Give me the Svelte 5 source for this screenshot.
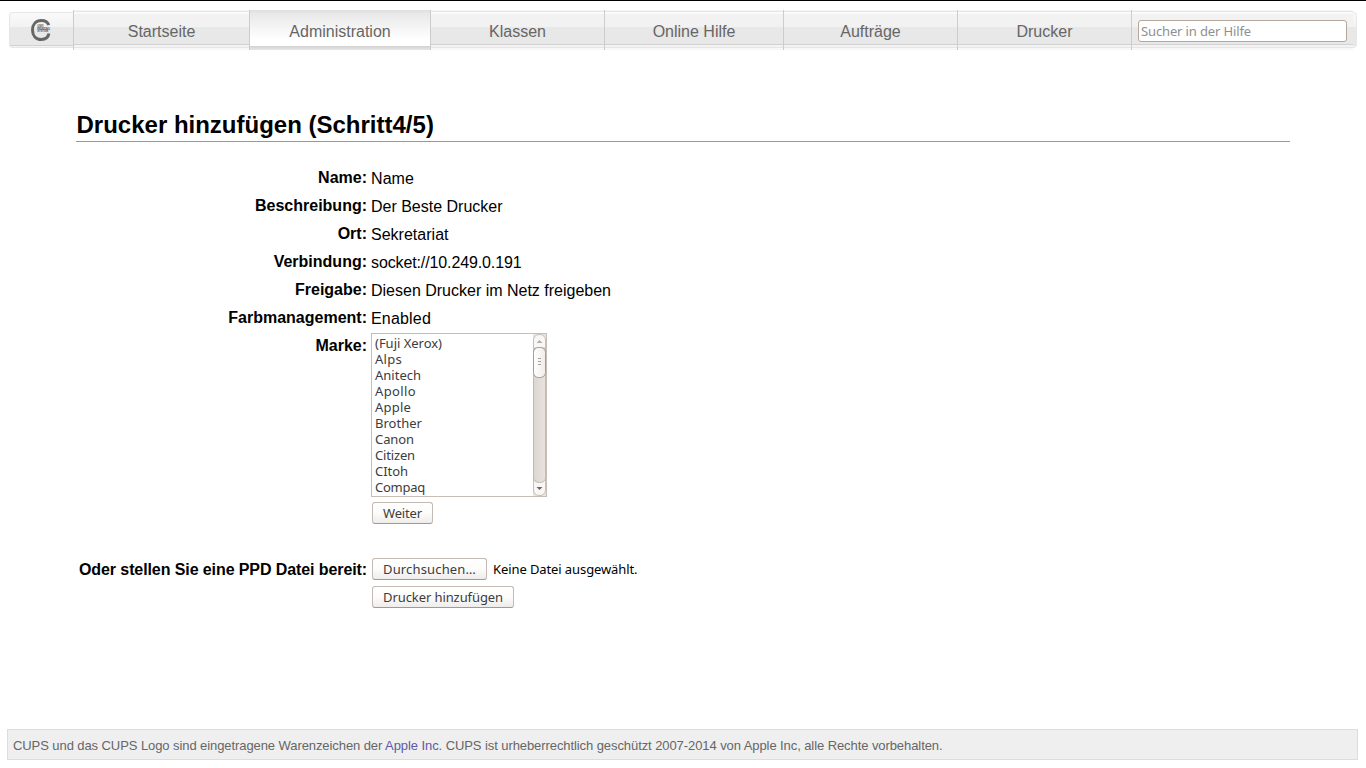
<script>
  const tabs = [
    { label: 'Startseite', width: 176 },
    { label: 'Administration', width: 181, active: true },
    { label: 'Klassen', width: 174 },
    { label: 'Online Hilfe', width: 179 },
    { label: 'Aufträge', width: 174 },
    { label: 'Drucker', width: 174 }
  ];
  const fields = [
    ['Name:', 'Name', 43],
    ['Beschreibung:', 'Der Beste Drucker', 131.5],
    ['Ort:', 'Sekretariat', 77.5],
    ['Verbindung:', 'socket://10.249.0.191', 150.5],
    ['Freigabe:', 'Diesen Drucker im Netz freigeben', 240],
    ['Farbmanagement:', 'Enabled', 60]
  ];
  const makes = [
    ['(Fuji Xerox)', 67], ['Alps', 27], ['Anitech', 46], ['Apollo', 41], ['Apple', 36],
    ['Brother', 47], ['Canon', 39], ['Citizen', 40], ['CItoh', 33], ['Compaq', 50]
  ];

  // Tracks the letters so that the text takes the given width.
  function fit(node, width) {
    const natural = node.getBoundingClientRect().width;
    node.style.letterSpacing = (width - natural) / node.textContent.length + 'px';
  }
</script>

<div class="page">
  <header>
    <div class="logo">
      <svg width="22" height="24" viewBox="0 0 22 24">
        <path d="M18.7 7.2C17.8 4 15 2.5 11.4 2.5C5.8 2.5 2.5 6.400 2.500 12C2.500 17.700 5.800 21.500 11.300 21.500C15.500 21.500 18.300 19.300 18.900 15.600" fill="none" stroke="#666" stroke-width="3" />
        <g fill="#555" font-family="Liberation Sans, sans-serif" font-weight="bold" font-size="3">
          <text x="7.200" y="9" textLength="6.500" lengthAdjust="spacingAndGlyphs">UNIX</text>
          <text x="7.200" y="11.600" textLength="12.800" lengthAdjust="spacingAndGlyphs">PRINTING</text>
          <text x="7.200" y="14.200" textLength="11" lengthAdjust="spacingAndGlyphs">SYSTEM</text>
        </g>
      </svg>
    </div>
    {#each tabs as tab}
      <a class="tab" class:active={tab.active} style="width:{tab.width}px">{tab.label}</a>
    {/each}
    <div class="search"><div class="input ui"><span use:fit={110}>Sucher in der Hilfe</span></div></div>
    <div class="cap"></div>
  </header>

  <main>
    <h2>Drucker hinzufügen (Schritt4/5)</h2>
    <div class="form">
      {#each fields as [label, value, width]}
        <div class="row"><b>{label}</b><span class="value"><span use:fit={width}>{value}</span></span></div>
      {/each}
      <div class="row make">
        <b>Marke:</b>
        <div class="list ui">
          <div class="options">
            {#each makes as [name, width]}
              <div class="option"><span use:fit={width}>{name}</span></div>
            {/each}
          </div>
          <svg width="14" height="162" viewBox="0 0 14 162">
            <defs>
              <linearGradient id="thumb"><stop offset="0" stop-color="#fff" /><stop offset="1" stop-color="#f0edea" /></linearGradient>
              <linearGradient id="trough"><stop offset="0" stop-color="#dcd6d0" /><stop offset="1" stop-color="#e9e4df" /></linearGradient>
            </defs>
            <rect x="1" width="13" height="162" fill="#e9e4e0" />
            <rect x="1.500" y=".500" width="12" height="161" rx="5.500" fill="#f8f7f6" stroke="#c8beb5" />
            <path d="M1.500 14H13.500V143Q13.500 148.500 7.500 148.500Q1.500 148.500 1.500 143Z" fill="url(#trough)" stroke="#c4bab1" />
            <rect x="1.500" y="13.500" width="12" height="30" rx="5" fill="url(#thumb)" stroke="#a89a8f" />
            <path d="M6 24.500H9M6 27.500H9M6 30.500H9" stroke="#a9a29c" />
            <path d="M4.500 9H10.500L7.500 6Z" fill="#b4aea9" />
            <path d="M4.500 153H10.500L7.500 156Z" fill="#6c6864" />
          </svg>
        </div>
      </div>
      <div class="row"><b></b><button class="ui" style="width:61px"><span use:fit={39}>Weiter</span></button></div>
      <div class="row"></div>
      <div class="row">
        <b><span use:fit={288}>Oder stellen Sie eine PPD Datei bereit:</span></b>
        <button class="ui" style="width:115px"><span use:fit={93}>Durchsuchen…</span></button>
        <div class="file ui"><span use:fit={144.5}>Keine Datei ausgewählt.</span></div>
      </div>
      <div class="row"><b></b><button class="ui" style="width:142px"><span use:fit={120}>Drucker hinzufügen</span></button></div>
    </div>
  </main>

  <footer><span use:fit={929.5}>CUPS und das CUPS Logo sind eingetragene Warenzeichen der <a>Apple Inc.</a> CUPS ist urheberrechtlich geschützt 2007-2014 von Apple Inc, alle Rechte vorbehalten.</span></footer>
</div>

<style>
  :global(body) { margin: 0; background: #fff; overflow: hidden; }
  .page {
    box-sizing: border-box; width: 1366px; height: 768px; border-top: 1px solid #000;
    display: flex; flex-direction: column; padding: 9px 8px 8px 7px;
    font: 16px/20px "Liberation Sans", Arial, sans-serif; color: #000;
  }
  header { display: flex; height: 40px; margin-left: 2px; color: #666; }
  .tab, .search {
    box-sizing: border-box; height: 40px; border-left: 1px solid #ccc;
    background: linear-gradient(#f6f6f6 0 1px, #e6e6e6 1px 2px, #fafafa 2px 4px, #f2f2f2 4px 17px, #e8e8e8 17px 34px, #d2d2d2 34px 35px, #f3f3f3 35px 37px, #e6e6e6 37px 38px, #f8f8f8 38px);
  }
  .tab { text-align: center; line-height: 43px; }
  .tab.active { background: linear-gradient(#dedede, #e9e9e9 4px, #fff 30px, #fff 36px, #d2d2d2 36px, #e6e6e6 40px); }
  .logo {
    box-sizing: border-box; width: 64px; height: 36px; margin-top: 2px; padding: 5px 0 0 20px;
    border: solid #e6e6e6; border-width: 1px 0 1px 1px; border-radius: 4px 0 0 4px;
    background: linear-gradient(#fafafa, #f2f2f2 14px, #e8e8e8 14px 32px, #d2d2d2 32px 33px, #f3f3f3 33px);
  }
  .logo svg { display: block; }
  .search { width: 222px; padding: 10px 0 0 6px; }
  .cap {
    box-sizing: border-box; width: 4px; height: 36px; margin-top: 2px; border: solid #e8e8e8; border-width: 1px 1px 1px 0; border-radius: 0 4px 4px 0;
    background: linear-gradient(#fafafa, #f2f2f2 14px, #e8e8e8 14px 33px, #f3f3f3 33px);
  }
  .ui { font: 13px/16px "Noto Sans", "Open Sans", sans-serif; color: #3c3c3c; white-space: nowrap; }
  .input {
    box-sizing: border-box; width: 209px; height: 22px; border: 1px solid #b5a79b; border-radius: 3px;
    background: #fff; color: #8f8f8f; padding: 2px; line-height: 17px;
  }
  main { flex: 1; padding: 59px 68px 0 69px; }
  h2 { box-sizing: border-box; height: 33px; margin: 0; border-bottom: 1px solid #999; padding-left: .5px; font-size: 24px; line-height: 31px; }
  .form { margin-top: 22px; }
  .row { display: flex; height: 28px; }
  .row > b { width: 291px; margin-right: 4px; text-align: right; line-height: 27px; white-space: nowrap; }
  .value { line-height: 29px; white-space: nowrap; }
  .make { height: 168px; }
  .list { box-sizing: border-box; width: 176px; height: 164px; margin-top: 1px; border: 1px solid #c9beb5; display: flex; justify-content: space-between; background: #fff; }
  .options { padding: 1px 0 0 3px; }
  .option { height: 16px; }
  button {
    box-sizing: border-box; height: 22px; margin: 2px 0 0 1px; padding: 0; border: 1px solid #c5bab1;
    border-bottom-color: #a6988d; border-radius: 3px; background: linear-gradient(#fff, #fcfcfb 50%, #efedeb);
  }
  .file { color: #000; padding-top: 5px; margin-left: 6px; }
  footer {
    box-sizing: border-box; height: 31px; border: 1px solid #ddd; background: #efefef; padding: 0 5px;
    font-size: 13px; line-height: 31px; color: #666; white-space: nowrap;
  }
  footer a { color: #6059a5; }
</style>
